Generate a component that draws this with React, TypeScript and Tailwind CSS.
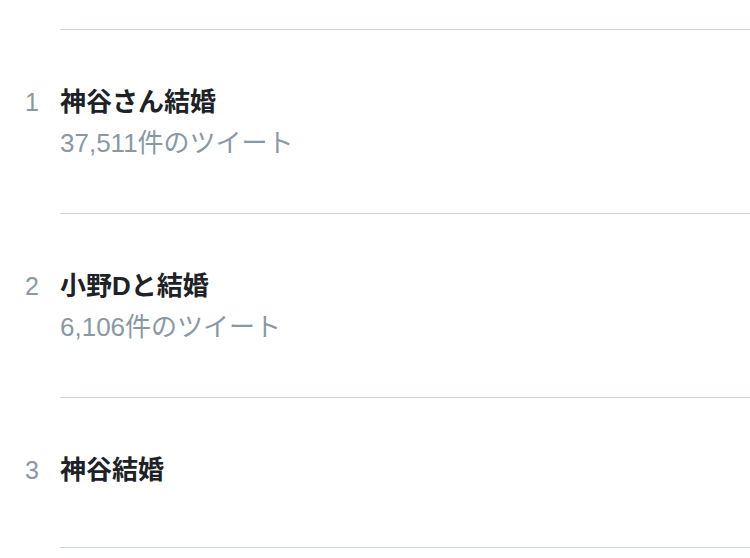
const trends = [
  { rank: 1, title: "神谷さん結婚", count: "37,511件のツイート" },
  { rank: 2, title: "小野Dと結婚", count: "6,106件のツイート" },
  { rank: 3, title: "神谷結婚", count: null },
]

export default function App() {
  return (
    <div
      className="w-[750px] h-[558px] bg-white overflow-hidden pt-[29px]"
      style={{ fontFamily: '"Liberation Sans", "Noto Sans CJK JP", sans-serif' }}
    >
      {trends.map((t, i) => (
        <div key={t.rank} className="flex">
          <div className="w-[60px] shrink-0 pl-[25px] pt-[56px] text-[25px] leading-[34px] text-[#8899a6]">
            {t.rank}
          </div>
          <div
            className={`flex-1 border-t border-[#ccd6dd] pt-[55px] ${
              t.count ? "pb-[53px]" : "pb-[60px]"
            } ${i === trends.length - 1 ? "border-b" : ""}`}
          >
            <p className="text-[26px] leading-[34px] font-bold text-[#1c2226]">{t.title}</p>
            {t.count && (
              <p className="mt-[7px] text-[26px] leading-[34px] text-[#8899a6]">{t.count}</p>
            )}
          </div>
        </div>
      ))}
    </div>
  )
}
